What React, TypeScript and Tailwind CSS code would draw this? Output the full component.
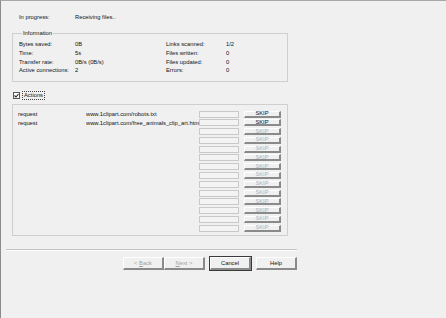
import React from 'react'

const stats: [string, string, string, string][] = [
    ['Bytes saved:', '0B', 'Links scanned:', '1/2'],
    ['Time:', '5s', 'Files written:', '0'],
    ['Transfer rate:', '0B/s (0B/s)', 'Files updated:', '0'],
    ['Active connections:', '2', 'Errors:', '0'],
]

const actions = [
    { kind: 'request', url: 'www.1clipart.com/robots.txt', active: true },
    { kind: 'request', url: 'www.1clipart.com/free_animals_clip_art.htm', active: true },
    ...Array.from({ length: 12 }, () => ({ kind: '', url: '', active: false })),
]

const WinButton = ({
    children,
    disabled,
    isDefault,
}: {
    children: React.ReactNode
    disabled?: boolean
    isDefault?: boolean
}) => (
    <button
        className={
            'w-[41px] h-[13px] flex items-center justify-center bg-[#f0f0f0] border-t border-l border-b-2 border-r-2 border-t-white border-l-white border-b-[#8a8a8a] border-r-[#8a8a8a] ' +
            (disabled ? 'text-[#a0a0a0] ' : 'text-[#111] ') +
            (isDefault ? 'outline outline-1 outline-[#3a3a3a]' : '')
        }
    >
        {children}
    </button>
)

export default function App() {
    return (
        <div className="w-[446px] h-[318px] overflow-hidden bg-[#f0f0f0] border-l border-t border-l-[#8c8c8c] border-t-[#a8a8a8] text-[5.8px] leading-[8px] text-[#111] font-['Liberation_Sans',Arial,sans-serif]">
            <div className="flex pt-[12px] pl-[18px]">
                <span className="w-[56px]">In progress:</span>
                <span>Receiving files..</span>
            </div>

            <fieldset className="ml-[11px] mt-[8px] w-[276px] border border-[#cfcfcf] pt-[3px] pb-[6px] pl-[6px]">
                <legend className="ml-[3px] px-[1px]">Information</legend>
                {stats.map(([a, b, c, d]) => (
                    <div key={a} className="flex h-[8.7px] items-center">
                        <span className="w-[56px]">{a}</span>
                        <span className="w-[91px]">{b}</span>
                        <span className="w-[60px]">{c}</span>
                        <span>{d}</span>
                    </div>
                ))}
            </fieldset>

            <div className="flex items-center ml-[12px] mt-[9px] gap-[2px]">
                <span className="w-[7px] h-[7px] bg-white border border-[#555] flex items-center justify-center">
                    <svg width="5" height="5" viewBox="0 0 5 5">
                        <path d="M0.5 2.5 L2 4 L4.5 1" stroke="#222" strokeWidth="1.1" fill="none" />
                    </svg>
                </span>
                <span className="border border-dotted border-[#444] px-[1px] leading-[7px]">Actions</span>
            </div>

            <div className="ml-[11px] mt-[4px] w-[276px] h-[132px] border border-[#cfcfcf] pt-[5px] pl-[5px]">
                {actions.map((row, i) => (
                    <div key={i} className="flex items-center h-[8.77px]">
                        <span className="w-[68px]">{row.kind}</span>
                        <span className="w-[113px] whitespace-nowrap overflow-hidden">{row.url}</span>
                        <span className="w-[40px] h-[7px] border border-[#c9c9c9] bg-[#f3f3f3]" />
                        <span
                            className={
                                'ml-[5px] w-[37px] h-[7px] flex items-center justify-center leading-[5px] border-t border-l border-b-2 border-r-2 border-t-white border-l-white border-b-[#8a8a8a] border-r-[#8a8a8a] ' +
                                (row.active ? 'text-[#111]' : 'text-[#b0b0b0]')
                            }
                        >
                            SKIP
                        </span>
                    </div>
                ))}
            </div>

            <div className="ml-[5px] mt-[13px] w-[291px] h-[2px] border-t border-t-[#c4c4c4] border-b border-b-white" />

            <div className="flex justify-end w-[296px] mt-[6px]">
                <div className="flex">
                    <WinButton disabled>
                        &lt;&nbsp;<span className="underline">B</span>ack
                    </WinButton>
                    <WinButton disabled>
                        <span className="underline">N</span>ext&nbsp;&gt;
                    </WinButton>
                </div>
                <div className="ml-[5px]">
                    <WinButton isDefault>Cancel</WinButton>
                </div>
                <div className="ml-[5px]">
                    <WinButton>Help</WinButton>
                </div>
            </div>
        </div>
    )
}
